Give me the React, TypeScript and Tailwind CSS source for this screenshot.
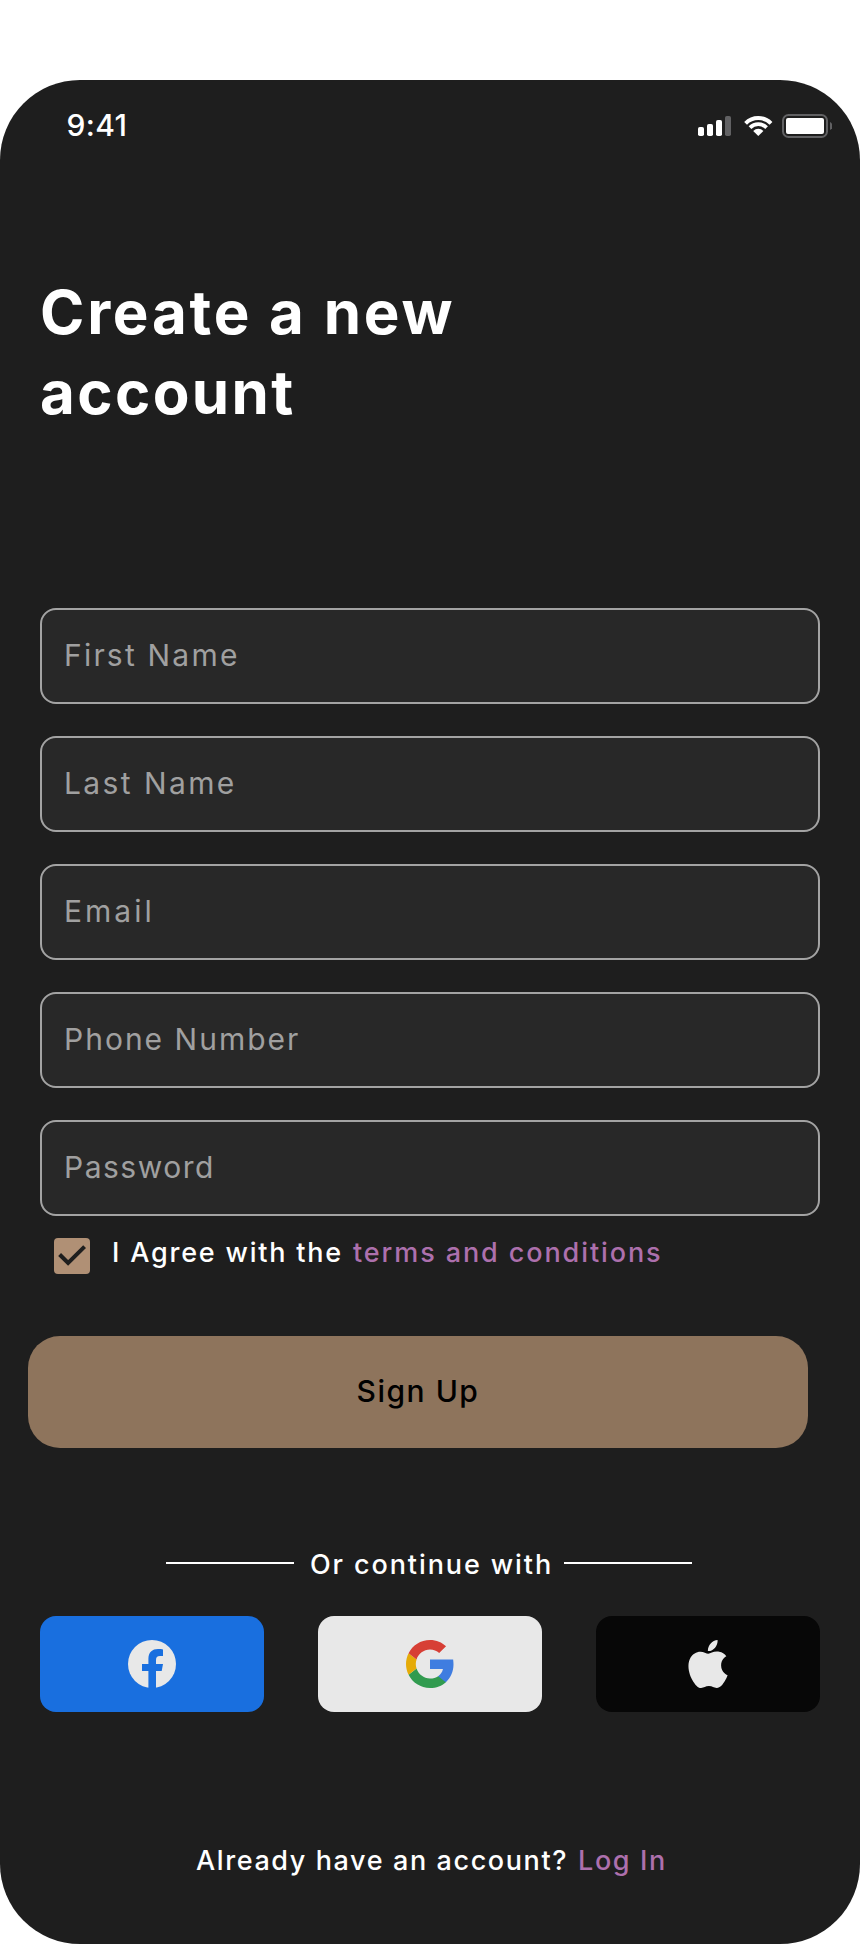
import React, { useState } from 'react';

const fields = [
  { name: 'firstName', label: 'First Name', type: 'text', spacing: 'tracking-[2.2px]' },
  { name: 'lastName', label: 'Last Name', type: 'text', spacing: 'tracking-[2.4px]' },
  { name: 'email', label: 'Email', type: 'email', spacing: 'tracking-[3px]' },
  { name: 'phone', label: 'Phone Number', type: 'tel', spacing: 'tracking-[2px]' },
  { name: 'password', label: 'Password', type: 'password', spacing: 'tracking-[1.5px]' },
];

const StatusBar: React.FC = () => (
  <div className="flex h-[92px] items-center justify-between pl-[66.5px] pr-7 text-white">
    <span className="pb-[2px] text-[30px] leading-9 font-medium tracking-[0.4px]">9:41</span>
    <div className="flex items-center">
      {/* Signal */}
      <svg width="34" height="24" viewBox="0 0 34 24" fill="currentColor">
        <rect x="0" y="13" width="6" height="9" rx="1.8" />
        <rect x="9" y="10" width="6" height="12" rx="1.8" />
        <rect x="18" y="6" width="6" height="16" rx="1.8" />
        <rect x="27" y="2" width="6" height="20" rx="1.8" fill="#616163" />
      </svg>
      {/* Wifi */}
      <svg className="ml-3" width="29" height="24" viewBox="0 0 29 24" fill="none" stroke="currentColor">
        <path d="M1.6 9.3A18 18 0 0 1 27 9.3" strokeWidth="4" />
        <path d="M6 13.6A11.8 11.8 0 0 1 22.6 13.6" strokeWidth="3.8" />
        <path d="M14.3 22L9.2 16.9A7.3 7.3 0 0 1 19.4 16.9Z" fill="currentColor" stroke="none" />
      </svg>
      {/* Battery */}
      <svg className="ml-[9px]" width="50" height="24" viewBox="0 0 50 24">
        <rect x="1" y="1" width="44" height="22" rx="5.5" fill="none" stroke="#616163" strokeWidth="2" />
        <rect x="4" y="4" width="38" height="16" rx="2" fill="currentColor" />
        <path d="M48 8a4.4 4.4 0 0 1 0 8z" fill="#616163" />
      </svg>
    </div>
  </div>
);

const FacebookIcon: React.FC = () => (
  <svg width="48" height="48" viewBox="0 0 48 48">
    <circle cx="24" cy="24" r="24" fill="#e8e8e8" />
    <path
      fill="#196fdf"
      d="M20.4 48V31H14v-7h6.4v-5.2C20.4 12.3 24.2 9 30 9c2 0 3.9.2 5 .4V16h-3c-3 0-4 1.6-4 3.9V24h7l-1.3 7H28v17z"
    />
  </svg>
);

const GoogleIcon: React.FC = () => (
  <svg width="48" height="48" viewBox="0 0 24 24">
    <path fill="#3f7de0" d="M23.75 12.27c0-.79-.07-1.8-.19-2.48H12v4.72h6.47c-.29 1.48-1.14 2.73-2.4 3.58v3h3.86c2.26-2.09 3.82-5.17 3.82-8.82z" />
    <path fill="#319b4f" d="M12 24c3.24 0 5.95-1.08 7.93-2.91l-3.86-3c-1.08.72-2.45 1.16-4.07 1.16-3.13 0-5.78-2.11-6.73-4.96L1.29 17.38C3.26 21.3 7.31 24 12 24z" />
    <path fill="#e5ab08" d="M5.27 14.29c-.25-.72-.38-1.49-.38-2.29s.14-1.57.38-2.29L1.29 6.62C.47 8.24 0 10.06 0 12s.47 3.76 1.28 5.38l3.99-3.09z" />
    <path fill="#d73f35" d="M12 4.75c1.77 0 3.35.61 4.6 1.8l3.42-3.42C17.95 1.19 15.24 0 12 0 7.31 0 3.26 2.7 1.29 6.62l3.98 3.09c.95-2.85 3.6-4.96 6.73-4.96z" />
  </svg>
);

const AppleIcon: React.FC = () => (
  <svg width="48" height="48" viewBox="0 0 24 24" fill="#e8e8e8">
    <path d="M12.152 6.896c-.948 0-2.415-1.078-3.96-1.04-2.04.027-3.91 1.183-4.961 3.014-2.117 3.675-.546 9.103 1.519 12.09 1.013 1.454 2.208 3.09 3.792 3.039 1.52-.065 2.09-.987 3.935-.987 1.831 0 2.35.987 3.96.948 1.637-.026 2.676-1.48 3.676-2.948 1.156-1.688 1.636-3.325 1.662-3.415-.039-.013-3.182-1.221-3.22-4.857-.026-3.04 2.48-4.494 2.597-4.559-1.429-2.09-3.623-2.324-4.39-2.376-2-.156-3.675 1.09-4.61 1.09zM15.53 3.83c.843-1.012 1.4-2.427 1.245-3.83-1.207.052-2.662.805-3.532 1.818-.78.896-1.454 2.338-1.273 3.714 1.338.104 2.715-.688 3.559-1.701" />
  </svg>
);

const App: React.FC = () => {
  const [form, setForm] = useState<Record<string, string>>({});
  const [agreed, setAgreed] = useState(true);

  const handleSubmit = (e: React.FormEvent) => {
    e.preventDefault();
  };

  return (
    <div className="w-[860px] bg-white pt-20 font-['Inter',sans-serif]">
      <main className="h-[1864px] rounded-[80px] bg-[#1e1e1e]">
        <StatusBar />

        <h1 className="ml-10 mt-[100px] w-[460px] text-[60px] leading-[80px] font-bold text-white">
          <span className="tracking-[2.75px]">Create a new</span>{' '}
          <span className="tracking-[2.4px]">account</span>
        </h1>

        <form onSubmit={handleSubmit} className="mt-[176px]">
          <div className="mx-10 flex flex-col gap-8">
            {fields.map((field) => (
              <input
                key={field.name}
                type={field.type}
                placeholder={field.label}
                value={form[field.name] || ''}
                onChange={(e) => setForm({ ...form, [field.name]: e.target.value })}
                className={`h-24 w-full rounded-2xl border-2 border-[#a3a3a3] bg-[#282828] px-[22px] pb-[3px] text-[30px] text-white outline-none placeholder:text-[#a0a0a0] ${field.spacing}`}
              />
            ))}
          </div>

          <div className="ml-[54px] mt-[18px] flex items-start">
            <button
              type="button"
              aria-label="Agree"
              onClick={() => setAgreed(!agreed)}
              className="mt-1 h-9 w-9 rounded bg-[#b09075]"
            >
              {agreed && (
                <svg width="36" height="36" viewBox="0 0 36 36" fill="none" stroke="#1e1e1e" strokeWidth="4">
                  <path d="M5.6 16.5L14.1 25L30.6 8.6" />
                </svg>
              )}
            </button>
            <p className="ml-[22px] flex gap-[10px] pt-px text-[27px] leading-9 font-medium text-white">
              <span className="tracking-[1.8px]">I Agree with the</span>
              <a href="#" className="tracking-[1.9px] text-[#ad70ad]">terms and conditions</a>
            </p>
          </div>

          <button
            type="submit"
            className="ml-7 mt-[62px] h-28 w-[780px] rounded-[32px] bg-[#8e745c] pb-px text-[30px] font-medium tracking-[1.5px] text-black"
          >
            Sign Up
          </button>
        </form>

        <div className="ml-[166px] mt-[97px] flex h-9 items-center">
          <div className="h-[2px] w-32 bg-white"></div>
          <span className="ml-4 w-[254px] pt-[3px] text-[27px] leading-9 font-medium tracking-[1.9px] whitespace-nowrap text-white">
            Or continue with
          </span>
          <div className="h-[2px] w-32 bg-white"></div>
        </div>

        <div className="mx-10 mt-[35px] flex justify-between">
          <button className="flex h-24 w-56 items-center justify-center rounded-2xl bg-[#196fdf]">
            <FacebookIcon />
          </button>
          <button className="flex h-24 w-56 items-center justify-center rounded-2xl bg-[#e8e8e8]">
            <GoogleIcon />
          </button>
          <button className="flex h-24 w-56 items-center justify-center rounded-2xl bg-[#070707]">
            <AppleIcon />
          </button>
        </div>

        <p className="ml-[196px] mt-[131px] flex gap-[10px] text-[27px] leading-9 font-medium text-white">
          <span className="tracking-[1.6px]">Already have an account?</span>
          <a href="#" className="tracking-[1.6px] text-[#ad70ad]">Log In</a>
        </p>
      </main>
    </div>
  );
};

export default App;
